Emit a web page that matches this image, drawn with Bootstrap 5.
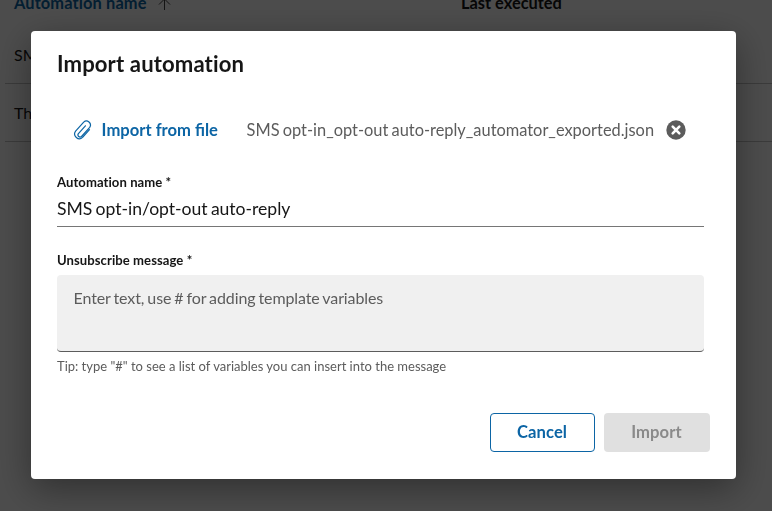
<!DOCTYPE html>
<html lang="en">
<head>
<meta charset="utf-8">
<meta name="viewport" content="width=device-width, initial-scale=1">
<title>Import automation</title>
<link href="https://cdn.jsdelivr.net/npm/bootstrap@5.3.0/dist/css/bootstrap.min.css" rel="stylesheet">
<style>
  body { font-family: Lato, "Liberation Sans", sans-serif; height: 511px; overflow: hidden; background: #fff; color: #161616; font-size: 16px; line-height: 24px; font-variant-ligatures: none; }
  .automations { margin: -12px 0 0 5px; }
  .list-line { display: grid; grid-template-columns: 447px 1fr; padding-left: 9px; height: 58px; align-items: center; border-bottom: 1px solid #c4c4c4; }
  .list-head { height: 38px; align-items: start; padding-top: 3px; font-size: 16.4px; font-weight: 700; border: 0; }
  .list-head .link-blue { letter-spacing: .12px; }
  .sort-arrow { margin: 7px 0 0 10px; }
  .link-blue { color: #0c65a5; }
  .shade { background: rgba(0,0,0,.7); }
  .modal.import-modal { padding: 31px 0 0 31px; overflow: hidden; }
  .import-dialog { width: 705px; max-width: none; margin: 0; }
  .import-dialog .modal-content { height: 448px; border: 0; border-radius: 4px; padding: 18px 26px 27px; color: #161616; box-shadow: 0 10px 36px rgba(0,0,0,.38); }
  .dialog-title { font-size: 22.100px; line-height: 30px; font-weight: 700; letter-spacing: .12px; }
  .file-line { margin: 39px 0 0 16px; height: 24px; }
  .file-link { font-size: 16.600px; margin-left: 8.600px; font-variant-ligatures: common-ligatures; }
  .file-name { margin-left: 28.600px; margin-right: 11.800px; color: #5c5c5c; font-size: 16.400px; word-spacing: -1px; }
  .field-label { font-size: 13.100px; line-height: 16px; font-weight: 700; margin: 0; display: block; letter-spacing: .06px; }
  .name-field { margin-top: 32px; width: 647px; }
  .name-field .form-control { height: 37px; padding: 1px 0 0; border: 0; border-bottom: 1px solid #767676; border-radius: 0; font-size: 17.600px; letter-spacing: -.03px; word-spacing: -1.200px; color: #161616; background: #fff; }
  .message-field { margin-top: 25px; width: 647px; }
  .message-field .form-control { height: 77px; margin-top: 7px; padding: 11px 16.500px; border: 0; border-bottom: 1px solid #5c5c5c; border-radius: 4px; background: #f0f0f0; resize: none; font-size: 16px; line-height: 24px; letter-spacing: -.1px; word-spacing: -1px; }
  .message-field .form-control::placeholder { color: #5c5c5c; opacity: 1; }
  .field-tip { font-size: 13px; line-height: 16px; margin-top: 6px; color: #5c5c5c; }
  .actions { gap: 9px; }
  .actions .btn { height: 39px; padding: 0 1px 0 0; font-size: 16.600px; font-weight: 700; border-radius: 4px; letter-spacing: .1px; }
  .btn-cancel { width: 105px; color: #0c65a5; border: 1px solid #0c65a5; background: #fff; }
  .btn-import, .btn-import:disabled { width: 106px; color: #8a8a8a; background: #e0e0e0; border: 0; opacity: 1; }
</style>
</head>
<body>
<main class="automations">
  <div class="list-line list-head">
    <div class="d-flex"><span class="link-blue">Automation name</span>
      <svg width="14" height="14" viewBox="0 0 14 14" class="sort-arrow" fill="none" stroke="#444" stroke-width="1"><path d="M7.500 12V1M2 6.500 7.500 1 13 6.500"/></svg>
    </div>
    <div>Last executed</div>
  </div>
  <div class="list-line"><div>SMS</div></div>
  <div class="list-line"><div>Thank</div></div>
</main>

<div class="modal-backdrop shade"></div>
<div class="modal import-modal d-block" tabindex="-1" role="dialog" aria-labelledby="dialogTitle">
  <div class="modal-dialog import-dialog">
    <div class="modal-content">
      <h1 class="dialog-title mb-0" id="dialogTitle">Import automation</h1>
      <div class="file-line d-flex align-items-center">
        <svg width="20" height="20" viewBox="0 0 20 20" fill="none" stroke="#0c65a5" stroke-width="1.200" stroke-linecap="round" stroke-linejoin="round"><path d="M16.500 9.600 9.600 17.400a4.700 4.700 0 0 1-7-6.200l8.100-9.100a4 4 0 0 1 6 5.200l-8.200 9.200a2.100 2.100 0 0 1-3.100-2.800l7-7.900"/></svg>
        <a class="link-blue fw-bold text-decoration-none file-link" href="#">Import from file</a>
        <span class="file-name">SMS opt-in_opt-out auto-reply_automator_exported.json</span>
        <svg width="20" height="20" viewBox="0 0 20 20"><circle cx="10" cy="10" r="9.700" fill="#5c5c5c"/><path d="m6.700 6.700 6.600 6.600m0-6.600-6.600 6.600" stroke="#fff" stroke-width="2.600" stroke-linecap="round"/></svg>
      </div>
      <div class="name-field">
        <label class="field-label" for="automationName">Automation name *</label>
        <input class="form-control" id="automationName" value="SMS opt-in/opt-out auto-reply">
      </div>
      <div class="message-field">
        <label class="field-label" for="unsubscribeMessage">Unsubscribe message *</label>
        <textarea class="form-control" id="unsubscribeMessage" placeholder="Enter text, use # for adding template variables"></textarea>
        <div class="field-tip">Tip: type "#" to see a list of variables you can insert into the message</div>
      </div>
      <div class="actions d-flex justify-content-end mt-auto">
        <button class="btn btn-cancel" type="button">Cancel</button>
        <button class="btn btn-import" type="button" disabled>Import</button>
      </div>
    </div>
  </div>
</div>
<script src="https://cdn.jsdelivr.net/npm/bootstrap@5.3.0/dist/js/bootstrap.bundle.min.js"></script>
</body>
</html>
